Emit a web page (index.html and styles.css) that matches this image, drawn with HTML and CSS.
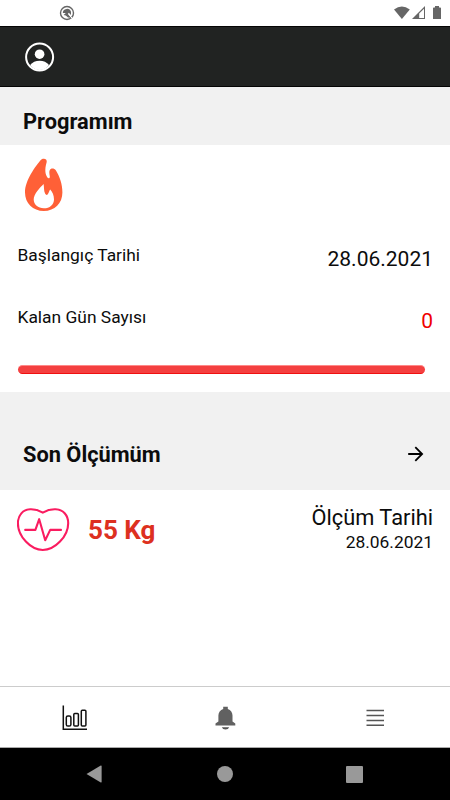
FILE: index.html
```html
<!DOCTYPE html>
<html lang="tr">
<head>
    <meta charset="UTF-8">
    <meta name="viewport" content="width=device-width, initial-scale=1.0">
    <title>Programım</title>
    <link rel="stylesheet" href="styles.css">
</head>
<body>

    <div class="status-bar">
        <svg width="16" height="16" viewBox="0 0 16 16">
            <circle cx="8" cy="8" r="6.5" fill="none" stroke="#666" stroke-width="1.4"/>
            <path d="M3.8 8A4.2 4.2 0 0 1 12 6.8V10L9.8 7.8 8.8 9 12.2 12.8 9 12.4 6.8 10.4 4.6 10 6.8 8Z" fill="#666"/>
            <path d="M10.5 10.5L14 14" stroke="#fff" stroke-width="1"/>
        </svg>
        <svg width="48" height="16" viewBox="0 0 48 16">
            <path d="M0 4.6Q7.8-1.4 15.8 4.6L7.9 14Z" fill="#666"/>
            <path d="M18 14L31 1V14Z" fill="#666"/>
            <path d="M25.2 8.5L30 3.7V13H25.2Z" fill="#fff"/>
            <path d="M41 1H45V2.4H46.2Q47 2.4 47 3.2V14H39V3.2Q39 2.4 39.8 2.4H41Z" fill="#666"/>
        </svg>
    </div>

    <header class="header">
        <svg width="30" height="30" viewBox="0 0 30 30">
            <circle cx="14.6" cy="15" r="13.5" fill="none" stroke="#fff" stroke-width="2"/>
            <circle cx="14.6" cy="12.2" r="4.8" fill="#fff"/>
            <path d="M5.2 23Q8.6 18.7 14.6 18.7T24 23Q20.4 28 14.6 28T5.2 23Z" fill="#fff"/>
        </svg>
    </header>

    <main class="content">
        <div class="section-title">
            <h2>Programım</h2>
        </div>

        <section class="program">
            <svg class="flame" width="38" height="54" viewBox="0 0 38 54">
                <path d="M18.8 0.8C20.9 0.8 22.3 2.2 21.6 4.6C20.5 8.2 19.2 14.6 22.2 19.2C23.6 21.2 25 20.4 24.8 18.2C24.4 15.6 24 13.8 24.7 12.2C25.7 9.7 29.3 10 30.8 12.3C34.8 18.7 37.4 26.5 37.4 34.5C37.4 45.2 29.8 53 18.8 53C7.9 53 0 45.2 0 34.5C0 22.6 10.5 8.3 15.8 2.1C16.6 1.2 17.6 0.8 18.8 0.8Z" fill="#ff6037"/>
                <path d="M18.6 26C15.2 29.3 8.7 36 8.7 41.6C8.7 46.7 13.1 50.2 18.8 50.2C24.9 50.2 29 46.6 29 41.4C29 37.4 27.4 34 25.2 31.6C24.4 32.4 24.1 34.8 22.6 36.5C21.8 37.3 20.8 36.9 20.2 35.8C18.7 33.1 19.2 29 18.6 26Z" fill="#fff"/>
            </svg>
            <div class="row">
                <span class="label">Başlangıç Tarihi</span>
                <span class="value">28.06.2021</span>
            </div>
            <div class="row">
                <span class="label">Kalan Gün Sayısı</span>
                <span class="value red">0</span>
            </div>
            <div class="progress"></div>
        </section>

        <div class="section-title measure-title">
            <h2>Son Ölçümüm</h2>
            <svg width="16" height="16" viewBox="0 0 16 16">
                <path d="M0.2 8H14M7.3 1.2L14.1 8L7.3 14.8" fill="none" stroke="#000" stroke-width="1.8"/>
            </svg>
        </div>

        <section class="measure">
            <svg width="54" height="44" viewBox="0 0 54 44">
                <g fill="none" stroke="#fa1c60" stroke-width="2.1" stroke-linecap="round" stroke-linejoin="round">
                    <path d="M25.8 4.6C21.4 2.1 17.8 1.1 13.2 1.3C6 1.5 0.9 7.2 0.9 15.2C0.9 28.5 13.8 42 25.8 42C37.8 42 51.2 28.5 51.2 15.2C51.2 7.2 46 1.5 38.6 1.3C34.2 1.1 30.1 2.1 25.8 4.6Z"/>
                    <path d="M8.2 21.9H18.4L22.2 11.2L28.2 32.2L33.2 21.9H44"/>
                </g>
            </svg>
            <span class="weight">55 Kg</span>
            <div class="measure-date">
                <span class="value date-title">Ölçüm Tarihi</span>
                <span class="label">28.06.2021</span>
            </div>
        </section>
    </main>

    <nav class="tabs">
        <a class="tab">
            <svg width="26" height="26" viewBox="0 0 26 26">
                <g fill="none" stroke="#111" stroke-width="1.5">
                    <path d="M1.3 0.5V24.3H25"/>
                    <rect x="4.3" y="11" width="4.6" height="10" rx="1.6"/>
                    <rect x="11.8" y="8.5" width="4.6" height="12.5" rx="1"/>
                    <rect x="19.3" y="5.3" width="4.6" height="15.7" rx="1"/>
                </g>
            </svg>
        </a>
        <a class="tab">
            <svg width="22" height="24" viewBox="0 0 22 24">
                <path d="M9.2 0.8H13.8V2.9C16.8 3.8 18.5 6.5 18.5 9.5V15.5L21.3 17.5V19.5H1.5V17.5L4.4 15.5V9.5C4.4 6.5 6.2 3.8 9.2 2.9Z" fill="#616161"/>
                <path d="M7.8 21.3H15.2Q14.4 23.6 11.5 23.6T7.8 21.3Z" fill="#555"/>
            </svg>
        </a>
        <a class="tab">
            <svg width="18" height="18" viewBox="0 0 18 18">
                <path d="M0.5 1.5H18M0.5 6.5H18M0.5 11.5H18M0.5 16.3H18" stroke="#555" stroke-width="1.6"/>
            </svg>
        </a>
    </nav>

    <div class="android-nav">
        <svg width="16" height="18" viewBox="0 0 16 18">
            <path d="M0.5 9L14.8 0.6Q15.6 0.3 15.6 1V17Q15.6 17.7 14.8 17.4Z" fill="#999"/>
        </svg>
        <span class="home"></span>
        <span class="recent"></span>
    </div>

</body>
</html>
```
FILE: styles.css
```css
/* General Styles */
* {
    box-sizing: border-box;
}

body {
    margin: 0;
    height: 100vh;
    display: flex;
    flex-direction: column;
    background: #fff;
    color: #0c0c0c;
    font-family: Roboto, sans-serif;
}

svg {
    display: block;
    flex-shrink: 0;
}

.status-bar {
    height: 26px;
    padding: 5px 8px 0 59px;
    display: flex;
    justify-content: space-between;
}

.header {
    height: 61px;
    padding: 0 25px;
    display: flex;
    align-items: center;
    background: #212322;
    border-top: 1px solid #050505;
    border-bottom: 1px solid #050505;
}

.content {
    flex: 1;
}

/* Section headings */
.section-title {
    height: 58px;
    padding: 11px 26px 0 23px;
    display: flex;
    align-items: center;
    justify-content: space-between;
    background: #f1f1f1;
}

.measure-title {
    height: 98px;
    padding-top: 26px;
}

h2 {
    margin: 0;
    font-size: 21.8px;
    font-weight: 700;
}

/* Program */
.program {
    height: 247px;
    padding: 13px 17px 0 17.5px;
}

.flame {
    margin-left: 7.5px;
}

.row {
    height: 62px;
    display: flex;
    justify-content: space-between;
    padding-top: 33px;
}

.label {
    font-size: 17.4px;
    line-height: 20px;
}

.value {
    font-size: 21px;
    line-height: 28px;
}

.red {
    color: #f00000;
}

.progress {
    height: 9px;
    margin: 29px 8px 0 0;
    border-radius: 4.5px;
    background: #f44040;
    border-top: 1px solid #f88;
    border-bottom: 1px solid #f01010;
}

/* Last measurement */
.measure {
    display: flex;
    padding: 18px 17px 0;
}

.weight {
    margin: 6px 0 0 17px;
    font-size: 26px;
    font-weight: 700;
    line-height: 32px;
    color: #dd3020;
}

.measure-date {
    margin-left: auto;
    margin-top: -4px;
    display: flex;
    flex-direction: column;
    align-items: flex-end;
}

.date-title {
    font-size: 21.8px;
}

/* Bottom bars */
.tabs {
    height: 62px;
    padding-top: 1px;
    display: flex;
    border-top: 1px solid #ccc;
    border-bottom: 1px solid #aaa;
}

.tab {
    flex: 1;
    display: flex;
    align-items: center;
    justify-content: center;
}

.android-nav {
    height: 52px;
    padding: 0 87px 0 86px;
    display: flex;
    align-items: center;
    justify-content: space-between;
    background: #000;
}

.home {
    width: 16px;
    height: 16px;
    margin-left: 2px;
    border-radius: 50%;
    background: #999;
}

.recent {
    width: 17px;
    height: 17px;
    border-radius: 1px;
    background: #999;
}
```
